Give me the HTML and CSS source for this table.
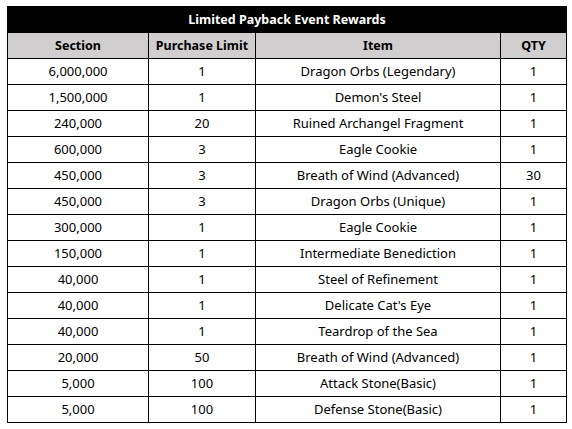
FILE: index.html
```html
<!DOCTYPE html>
<html>
<head>
<meta charset="utf-8">
<link rel="stylesheet" href="styles.css">
</head>
<body>
<table class="rewards">
  <colgroup>
    <col class="c-section">
    <col class="c-limit">
    <col class="c-item">
    <col class="c-qty">
  </colgroup>
  <thead>
    <tr class="title-row"><th colspan="4">Limited Payback Event Rewards</th></tr>
    <tr class="head-row"><th>Section</th><th>Purchase Limit</th><th>Item</th><th>QTY</th></tr>
  </thead>
  <tbody>
    <tr><td>6,000,000</td><td>1</td><td>Dragon Orbs (Legendary)</td><td>1</td></tr>
    <tr><td>1,500,000</td><td>1</td><td>Demon's Steel</td><td>1</td></tr>
    <tr><td>240,000</td><td>20</td><td>Ruined Archangel Fragment</td><td>1</td></tr>
    <tr><td>600,000</td><td>3</td><td>Eagle Cookie</td><td>1</td></tr>
    <tr><td>450,000</td><td>3</td><td>Breath of Wind (Advanced)</td><td>30</td></tr>
    <tr><td>450,000</td><td>3</td><td>Dragon Orbs (Unique)</td><td>1</td></tr>
    <tr><td>300,000</td><td>1</td><td>Eagle Cookie</td><td>1</td></tr>
    <tr><td>150,000</td><td>1</td><td>Intermediate Benediction</td><td>1</td></tr>
    <tr><td>40,000</td><td>1</td><td>Steel of Refinement</td><td>1</td></tr>
    <tr><td>40,000</td><td>1</td><td>Delicate Cat's Eye</td><td>1</td></tr>
    <tr><td>40,000</td><td>1</td><td>Teardrop of the Sea</td><td>1</td></tr>
    <tr><td>20,000</td><td>50</td><td>Breath of Wind (Advanced)</td><td>1</td></tr>
    <tr><td>5,000</td><td>100</td><td>Attack Stone(Basic)</td><td>1</td></tr>
    <tr><td>5,000</td><td>100</td><td>Defense Stone(Basic)</td><td>1</td></tr>
  </tbody>
</table>
</body>
</html>
```
FILE: styles.css
```css
html, body {
  margin: 0;
  padding: 0;
  background: #ffffff;
}
body {
  padding: 6px 0 0 7px;
  font-family: "Noto Sans", "Noto Sans CJK KR", sans-serif;
  font-size: 13px;
  color: #000;
}
.rewards {
  border-collapse: collapse;
  table-layout: fixed;
  width: 559px;
}
.c-section { width: 141px; }
.c-limit { width: 107px; }
.c-item { width: 245px; }
.c-qty { width: 66px; }
.rewards th, .rewards td {
  border: 1px solid #000;
  text-align: center;
  vertical-align: middle;
  line-height: 14px;
  white-space: nowrap;
}
.rewards td {
  height: 24px;
  padding: 0 0 1px 0;
}
.rewards th {
  height: 25px;
  padding: 0;
  font-size: 12.5px;
}
.title-row th {
  background: #000;
  color: #fff;
  font-weight: bold;
}
.head-row th {
  background: #d0cece;
  font-weight: bold;
}
```
